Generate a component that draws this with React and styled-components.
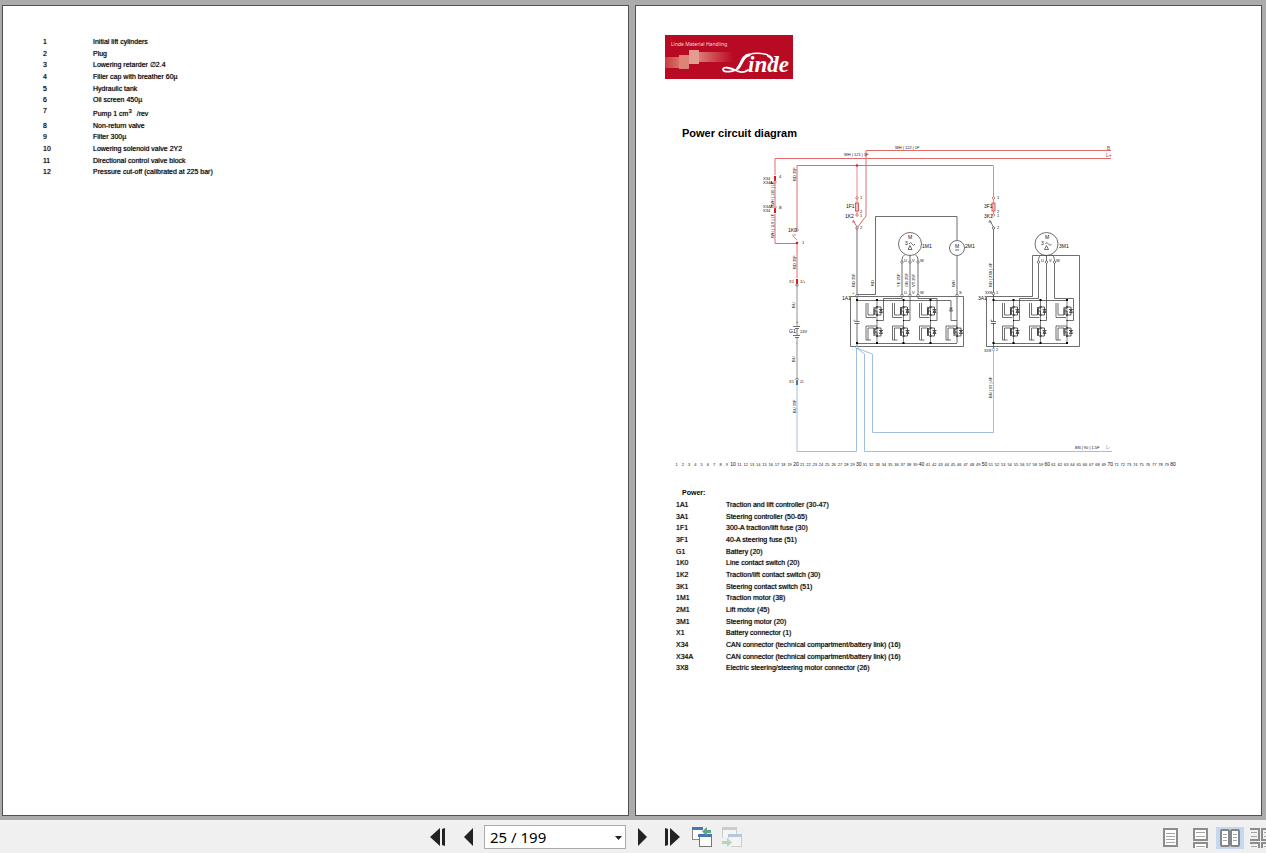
import { useState } from "react";
import styled, { createGlobalStyle } from "styled-components";

const GlobalStyle = createGlobalStyle`
  * {
    box-sizing: border-box;
  }
  body {
    margin: 0;
    font-family: "Liberation Sans", Arial, sans-serif;
    overflow: hidden;
  }
`;

const Viewer = styled.div`
  display: flex;
  flex-direction: column;
  height: 100vh;
  background-color: #ababab;
`;

const Spread = styled.main`
  flex: 1;
  min-height: 0;
  display: grid;
  grid-template-columns: 1fr 1fr;
  gap: 6px;
  padding: 5px 4px 4px 2px;
`;

const Page = styled.section`
  background-color: white;
  border: 1px solid #505050;
  padding: 29px;
  min-width: 0;
  overflow: hidden;
`;

const PartsTable = styled.table`
  border-collapse: collapse;
  margin-left: 11px;
  font-size: 7px;
  line-height: 11px;
  color: black;
  text-shadow: 0 0 1px rgba(0, 0, 0, 0.7);
`;

const PartRow = styled.tr`
  height: ${(props) => (props.$tall ? "14px" : "12px")};
  &:nth-child(3n) {
    height: 11px;
  }
`;

const PartId = styled.th`
  width: 50px;
  padding: 0;
  font-weight: 400;
  text-align: left;
  vertical-align: ${(props) => (props.$tall ? "top" : "middle")};
`;

const PartName = styled.td`
  padding: 0;
  white-space: nowrap;
  vertical-align: ${(props) => (props.$tall ? "bottom" : "middle")};
`;

const Sup = styled.sup`
  font-size: 6px;
  line-height: 1px;
  margin-right: 3px;
`;

const Logo = styled.svg`
  display: block;
  width: 128px;
  height: 44px;
`;

const Title = styled.h1`
  margin: 47px 0 0 17px;
  font-size: 11px;
  line-height: 14px;
  font-weight: 700;
`;

const Diagram = styled.svg`
  display: block;
  width: 510px;
  margin-left: 5px;
  font-family: "Liberation Sans Narrow", "Liberation Sans", Arial, sans-serif;
`;

const LegendTitle = styled.h2`
  margin: 0 0 0 17px;
  font-size: 7px;
  line-height: 11px;
  font-weight: 700;
`;

const Toolbar = styled.footer`
  display: flex;
  height: 33px;
  padding-left: 14px;
  background-color: #f0f0f0;
  overflow: hidden;
`;

const Nav = styled.nav`
  flex: 1;
  display: flex;
  align-items: center;
  justify-content: center;
  gap: 2px;
  padding-top: 1px;
`;

const ViewModes = styled.div`
  flex: none;
  width: 110px;
  display: flex;
  align-items: center;
  gap: 2px;
  padding-top: 2px;
  overflow: hidden;
`;

const ToolButton = styled.button`
  flex: none;
  display: flex;
  align-items: center;
  justify-content: center;
  width: 28px;
  height: 22px;
  padding: 0;
  border: none;
  background-color: ${(props) => (props.$active ? "#c5d8f1" : "transparent")};
`;

const PageBox = styled.div`
  position: relative;
  width: 142px;
  height: 24px;
`;

const PageSelect = styled.select`
  appearance: none;
  width: 100%;
  height: 100%;
  padding: 0 20px 0 5px;
  border: 1px solid #ababab;
  border-radius: 0;
  background-color: white;
  color: black;
  font-family: "Noto Sans", "Open Sans", sans-serif;
  font-size: 15px;
`;

const SelectArrow = styled.svg`
  position: absolute;
  right: 4px;
  top: 11px;
  pointer-events: none;
`;

const hydraulicParts = [
  ["1", "Initial lift cylinders"],
  ["2", "Plug"],
  ["3", "Lowering retarder ∅2.4"],
  ["4", "Filler cap with breather 60µ"],
  ["5", "Hydraulic tank"],
  ["6", "Oil screen 450µ"],
  ["7", <>Pump 1 cm<Sup>3</Sup> /rev</>, true],
  ["8", "Non-return valve"],
  ["9", "Filter 300µ"],
  ["10", "Lowering solenoid valve 2Y2"],
  ["11", "Directional control valve block"],
  ["12", "Pressure cut-off (calibrated at 225 bar)"],
];

const powerParts = [
  ["1A1", "Traction and lift controller (30-47)"],
  ["3A1", "Steering controller (50-65)"],
  ["1F1", "300-A traction/lift fuse (30)"],
  ["3F1", "40-A steering fuse (51)"],
  ["G1", "Battery (20)"],
  ["1K0", "Line contact switch (20)"],
  ["1K2", "Traction/lift contact switch (30)"],
  ["3K1", "Steering contact switch (51)"],
  ["1M1", "Traction motor (38)"],
  ["2M1", "Lift motor (45)"],
  ["3M1", "Steering motor (20)"],
  ["X1", "Battery connector (1)"],
  ["X34", "CAN connector (technical compartment/battery link) (16)"],
  ["X34A", "CAN connector (technical compartment/battery link) (16)"],
  ["3X8", "Electric steering/steering motor connector (26)"],
];

const Parts = ({ rows }) => (
  <PartsTable>
    <tbody>
      {rows.map(([id, name, tall]) => (
        <PartRow key={id} $tall={tall}>
          <PartId scope="row" $tall={tall}>
            {id}
          </PartId>
          <PartName $tall={tall}>{name}</PartName>
        </PartRow>
      ))}
    </tbody>
  </PartsTable>
);

const LindeLogo = () => (
  <Logo viewBox="0 0 128 44" role="img" aria-label="Linde Material Handling">
    <defs>
      <linearGradient id="fadeRight">
        <stop offset="0" stopColor="#dd7a72" />
        <stop offset="1" stopColor="#b90a24" />
      </linearGradient>
      <linearGradient id="fadeLeft">
        <stop offset="0" stopColor="#c63c40" />
        <stop offset="1" stopColor="#d8706a" />
      </linearGradient>
    </defs>
    <rect width="128" height="44" fill="#b90a24" />
    <rect x="0" y="22" width="14" height="11" fill="url(#fadeLeft)" />
    <rect x="34" y="17" width="34" height="10" fill="url(#fadeRight)" />
    <rect x="14" y="20" width="10" height="14" fill="#dc8476" />
    <rect x="24" y="15" width="10" height="14" fill="#e39d90" />
    <text x="6" y="11" fontSize="5" fill="#f6dcdc" fontFamily="Noto Sans">
      Linde Material Handling
    </text>
    <g fill="none" stroke="white" strokeLinecap="round">
      <path d="M73 33C70 37 58 38 58 34.500C58 31 66 33 71 35.500C75 37.500 79 38 83 35" strokeWidth="1.800" />
      <path d="M73 33C77 29 77 21 84 20" strokeWidth="3" />
      <path d="M78 24C82 19 90 18 96 18.500C104 19 109 23 107 27" strokeWidth="1.500" />
      <path d="M103 21c4 1.500 4.500 4 3.500 6" strokeWidth="2.200" />
    </g>
    <text
      x="83"
      y="37"
      fontSize="23"
      fontWeight="700"
      fontStyle="italic"
      fontFamily="Liberation Serif"
      fill="white"
    >
      inde
    </text>
  </Logo>
);

const RED = "#e26a6a";
const BLUE = "#9fc0e2";
const INK = "#4a4a4a";

// power transistor with its body diode; the lower one of a leg is flipped
const Mosfet = ({ x, y, flip }) => (
  <g transform={`translate(${x} ${y})`} fill="none" stroke={INK}>
    <path
      d={flip ? "M-11 8v-14h11M-9 8v-12h6v6M-11 8h5" : "M-11-8v14.500h10M-9-8v12h6v-6"}
      strokeWidth="0.800"
    />
    <path d="M-3-4v8M-2-4v8M-2-3h2M-2 0h2v3" stroke="#333" strokeWidth="0.800" />
    <path d="M0-4h4v8h-4M2-1.500h4M2.500 1.500h3l-1.500-3z" stroke="#333" strokeWidth="0.800" />
    <circle cx="0" cy="-4" r="0.800" fill="black" />
    <circle cx="0" cy="4" r="0.800" fill="black" />
  </g>
);

const Leg = ({ x }) => (
  <g>
    <path d={`M${x} 300V343`} stroke={INK} strokeWidth="0.700" />
    <Mosfet x={x} y={311} />
    <Mosfet x={x} y={332} flip />
    <rect x={x - 1} y="299" width="2" height="2" />
    <rect x={x - 1} y="342" width="2" height="2" />
    <rect x={x - 0.5} y="320" width="1" height="1" />
  </g>
);

const Terminal = ({ x, y, color = INK }) => (
  <circle cx={x} cy={y} r="1.200" fill="white" stroke={color} strokeWidth="0.700" />
);

const Motor = ({ x, y }) => (
  <g fill="none" stroke={INK} strokeWidth="0.800">
    <circle cx={x} cy={y} r="11.500" />
    <path d={`M${x - 1} ${y}q1.500-3 3 0t3 0`} />
    <path d={`M${x - 2} ${y + 5.5}l2-4l2 4z`} />
    <path d={`M${x - 5} ${y + 10.5}q-3 2-3 5v3M${x} ${y + 11.5}v6M${x + 5} ${y + 10.5}q3 2 3 5v3`} />
  </g>
);

// the fuse and contactor chain that feeds a controller
const Feed = ({ x }) => (
  <g fill="none" stroke="#d04040" strokeWidth="0.800">
    <path d={`M${x} 165.500V216`} stroke={RED} />
    <rect x={x - 1.5} y="203" width="3" height="8" fill="#f3c0c0" />
    <path d={`M${x} 227l-4-7M${x - 5} 222h3`} stroke={x > 900 ? INK : "#d04040"} />
    <Terminal x={x} y={198} color="#d04040" />
    <Terminal x={x} y={215} color="#d04040" />
    <Terminal x={x} y={228} />
  </g>
);

const labels = [
  [895, 149, "WH | 122 | 1F"],
  [844, 156, "WH | 121 | 1F"],
  [1075, 449, "BN | 90 | 1.5F"],
  [763, 180, "X34"],
  [763, 184, "X34A"],
  [763, 208, "X34A"],
  [763, 212, "X34"],
  [779, 178, "4"],
  [779, 209, "B"],
  [802, 244, "1"],
  [789, 283, "X1"],
  [800, 283, "1/+"],
  [789, 383, "X1"],
  [800, 383, "2/-"],
  [800, 333, "24V"],
  [860, 199, "1"],
  [860, 213, "2"],
  [860, 217, "1"],
  [860, 229, "2"],
  [997, 199, "1"],
  [997, 213, "2"],
  [997, 217, "1"],
  [997, 229, "2"],
  [904, 262, "U"],
  [912, 262, "V"],
  [920, 262, "W"],
  [1041, 262, "U"],
  [1049, 262, "V"],
  [1056, 262, "W"],
  [904, 294, "U"],
  [912, 294, "V"],
  [920, 294, "W"],
  [959, 294, "S"],
  [852, 294, "+"],
  [852, 350, "-"],
  [985, 294, "3X8"],
  [996, 294, "1"],
  [984, 352, "3X8"],
  [996, 351, "2"],
  [853, 321, "+"],
  [990, 321, "+"],
  [796, 323, "+"],
  [796, 344, "-"],
];

const deviceLabels = [
  [788, 232, "1K0"],
  [789, 333, "G1"],
  [846, 208, "1F1"],
  [845, 218, "1K2"],
  [984, 208, "3F1"],
  [984, 218, "3K1"],
  [922, 248, "1M1"],
  [965, 248, "2M1"],
  [1059, 248, "3M1"],
  [842, 300, "1A1"],
  [978, 300, "3A1"],
  [908, 239, "M"],
  [905, 245, "3"],
  [955, 248, "M"],
  [1045, 239, "M"],
  [1041, 245, "3"],
];

const wireLabels = [
  [796, 181, "RD 35F"],
  [774, 206, "WH | 120 | 1F"],
  [774, 238, "WH | 119 | 1F"],
  [796, 269, "RD 35F"],
  [795, 308, "BU"],
  [795, 362, "BU"],
  [796, 413, "BU 35F"],
  [855, 287, "RD 35F"],
  [874, 286, "RD"],
  [900, 287, "YE 25F"],
  [908, 287, "GN 25F"],
  [915, 287, "VT 25F"],
  [955, 287, "WH"],
  [992, 287, "RD | 23B | 4F"],
  [992, 398, "BN | 93 | 4F"],
];

const PowerCircuit = () => (
  <Diagram viewBox="670 140 510 347" role="img" aria-label="Power circuit diagram">
    <g fill="none" stroke={RED}>
      <path d="M866 216V150.500H1111M775 175V158.500H1111M797 230V165.500H993" />
      <path d="M775 183V205M775 214V243.500H797V278M866 216L857 228" />
      <path d="M797 240l-4-4M792 235h4" strokeWidth="0.800" />
    </g>
    <g fill="#e01818">
      <rect x="774" y="176" width="2" height="5" />
      <rect x="774" y="208" width="2" height="5" />
      <rect x="796" y="279" width="2" height="5" />
      <circle cx="857" cy="165.500" r="1.300" />
      <circle cx="797" cy="243" r="1.300" />
    </g>
    <Terminal x={775} y={182} color="#d04040" />
    <Terminal x={775} y={207} color="#d04040" />
    <Terminal x={797} y={230} color="#d04040" />

    <g fill="none" stroke={BLUE}>
      <path d="M797 385V451.500H856.500V348L864.500 354V451.500H1112" />
      <path d="M856.500 348L872.500 354V432.500H993.500V349" />
    </g>

    <Feed x={857} />
    <Feed x={993.5} />

    <g fill="none" stroke={INK} strokeWidth="0.800">
      <path d="M797 286V326M797 337V380" stroke="#777" />
      <path d="M793 326.500h7M795 328.500h4M793 335.500h7M795 337.500h4M797 329v6" />
      <path d="M857 229V321M857 323V347M993.500 229V321M993.500 323V349" />
      <path d="M854.500 321.500h5M854.500 323.500h5M991 321.500h5M991 323.500h5" />
      <path d="M857 294.500H875.500V216.500H957V240M957 256V343" />
      <circle cx="957" cy="248" r="7.500" />
      <path d="M955 250h4" />
      <path d="M850.500 296.500H963.500V346.500H850.500Z" />
      <path d="M857 300.500H951V320.500H957M857 343.500H957" />
      <path d="M949.500 308h3M949.500 311h3l-1.500-3z" />
      <path d="M902 262V298.500H883.500V320.500H877M910 262V320.500H903.500M918 262V298.500H937V320.500H930.500" />
      <path d="M986.500 296.500H1032.500V255.500H1079.500V346.500H986.500Z" />
      <path d="M993 300.500H1067M993 343.500H1067" />
      <path d="M1038.500 262V298.500H1019.500V320.500H1013.500M1046.500 262V320.500H1040.500M1054.500 262V298.500H1073.500V320.500H1067" />
    </g>
    <Motor x={910} y={244} />
    <Motor x={1046.5} y={244} />

    {[877, 903.5, 930.5, 1013.5, 1040.5, 1067].map((x) => (
      <Leg key={x} x={x} />
    ))}
    <Mosfet x={957} y={332} flip />
    {[857, 993.5].map((x) => (
      <g key={x}>
        <rect x={x - 1} y="299" width="2" height="2" />
        <rect x={x - 1} y="342" width="2" height="2" />
      </g>
    ))}

    {[902, 910, 918, 1038.5, 1046.5, 1054.5].map((x) => (
      <Terminal key={x} x={x} y={262} />
    ))}
    {[857, 902, 910, 918, 957].map((x) => (
      <Terminal key={x} x={x} y={295.5} />
    ))}
    <Terminal x={797} y={285} />
    <Terminal x={797} y={379.5} />
    <rect x="796" y="381" width="2" height="4" fill="#2f78d8" />
    <Terminal x={993.5} y={293.5} />
    <Terminal x={857} y={347.5} color="#5b94d6" />
    <Terminal x={993.5} y={349.5} color="#5b94d6" />

    <g fontSize="4" fill="#111">
      {labels.map(([x, y, text]) => (
        <text key={`${x}-${y}`} x={x} y={y}>
          {text}
        </text>
      ))}
      {wireLabels.map(([x, y, text]) => (
        <text key={`${x}-${y}`} transform={`translate(${x} ${y}) rotate(-90)`}>
          {text}
        </text>
      ))}
    </g>
    <g fontSize="5" fill="#111">
      {deviceLabels.map(([x, y, text]) => (
        <text key={`${x}-${y}`} x={x} y={y}>
          {text}
        </text>
      ))}
    </g>
    <g fontSize="5">
      <text x="1107" y="150" fill="#d03030">B</text>
      <text x="1106" y="157" fill="#d03030">L+</text>
      <text x="1106" y="449" fill="#6d9fd8">L-</text>
    </g>

    <g fill="#111" textAnchor="middle">
      {Array.from({ length: 80 }, (_, i) => i + 1).map((n) => (
        <text
          key={n}
          x={676.5 + (n - 1) * 6.285}
          y="466"
          fontSize={n % 10 === 0 ? 5 : 4}
        >
          {n}
        </text>
      ))}
    </g>
  </Diagram>
);

const FirstIcon = () => (
  <svg width="16" height="18" fill="#222">
    <path d="M10 0v18L0 9zM12 1l3-1v18l-3-1z" />
  </svg>
);

const LastIcon = () => (
  <svg width="16" height="18" fill="#222">
    <path d="M6 0v18l10-9zM4 1L1 0v18l3-1z" />
  </svg>
);

const PrevIcon = () => (
  <svg width="9" height="18" fill="#222">
    <path d="M9 0v18L0 9z" />
  </svg>
);

const NextIcon = () => (
  <svg width="9" height="18" fill="#222">
    <path d="M0 0v18l9-9z" />
  </svg>
);

const BackIcon = () => (
  <svg width="20" height="20" fill="none">
    <rect x="0.500" y="1.500" width="14" height="11" fill="white" stroke="#8a8a8a" />
    <path d="M0 1.500h11" stroke="#4677b0" strokeWidth="3" />
    <rect x="7.500" y="8.500" width="12" height="11" fill="white" stroke="#777" />
    <path d="M6 8.500h14" stroke="#4677b0" strokeWidth="3" />
    <path d="M11 0h9v7h-9z" fill="#f0f0f0" />
    <path d="M19 4.500h-6" stroke="#63a58a" strokeWidth="3" />
    <path d="M10 4.500l5-4.500v9z" fill="#63a58a" />
  </svg>
);

const ForwardIcon = () => (
  <svg width="20" height="20" fill="none">
    <rect x="0.500" y="1.500" width="14" height="11" fill="#f4f4f4" stroke="#cccccc" />
    <path d="M0 1.500h15" stroke="#cccccc" strokeWidth="3" />
    <rect x="6.500" y="8.500" width="13" height="11" fill="#f4f4f4" stroke="#cccccc" />
    <path d="M6 8.500h14" stroke="#b4c8de" strokeWidth="3" />
    <path d="M0 11h9v9H0z" fill="#f0f0f0" />
    <path d="M0 15.500h6" stroke="#b8d2c7" strokeWidth="3" />
    <path d="M10 15.500L5 11v9z" fill="#b8d2c7" />
  </svg>
);

const SingleIcon = () => (
  <svg width="15" height="19" fill="none" stroke="#8c8c8c">
    <rect x="1" y="1" width="13" height="17" fill="white" strokeWidth="2" />
    <path d="M3 5.500h9M3 8.500h9M3 11.500h9M3 14.500h9" stroke="#a5a5a5" />
  </svg>
);

const ContinuousIcon = () => (
  <svg width="15" height="20" fill="none" stroke="#8c8c8c">
    <path d="M1 0v12h13V0M1 20v-5h13v5" fill="white" strokeWidth="2" />
    <path d="M0 1h15" strokeWidth="2" />
    <path d="M3 4.500h9M3 8.500h9M3 18.500h9" stroke="#a5a5a5" />
  </svg>
);

const FacingIcon = () => (
  <svg width="20" height="18" fill="none" stroke="#858585">
    <rect x="1" y="1" width="8" height="16" rx="1" fill="white" strokeWidth="2" />
    <rect x="11" y="1" width="8" height="16" rx="1" fill="white" strokeWidth="2" />
    <path d="M3 5.500h4M3 8.500h4M3 11.500h4M13 5.500h4M13 8.500h4M13 11.500h4" stroke="#a5a5a5" />
  </svg>
);

const FacingContinuousIcon = () => (
  <svg width="20" height="20" fill="none" stroke="#8c8c8c">
    <path d="M0 1h9v11H0M20 1h-8v11h8M0 15h9v5M20 15h-8v5" strokeWidth="2" />
    <path d="M1 4.500h6M1 8.500h6M14 4.500h6M14 8.500h6M1 18.500h6M14 18.500h6" stroke="#a5a5a5" />
  </svg>
);

const PAGE_COUNT = 199;

const App = () => {
  const [page, setPage] = useState(25);
  const go = (n) => setPage(Math.min(PAGE_COUNT, Math.max(1, n)));

  return (
    <Viewer>
      <GlobalStyle />
      <Spread>
        <Page>
          <Parts rows={hydraulicParts} />
        </Page>
        <Page>
          <LindeLogo />
          <Title>Power circuit diagram</Title>
          <PowerCircuit />
          <LegendTitle>Power:</LegendTitle>
          <Parts rows={powerParts} />
        </Page>
      </Spread>
      <Toolbar>
        <Nav>
          <ToolButton aria-label="First page" onClick={() => go(1)}>
            <FirstIcon />
          </ToolButton>
          <ToolButton aria-label="Previous page" onClick={() => go(page - 1)}>
            <PrevIcon />
          </ToolButton>
          <PageBox>
            <PageSelect
              aria-label="Page"
              value={page}
              onChange={(e) => go(Number(e.target.value))}
            >
              {Array.from({ length: PAGE_COUNT }, (_, i) => (
                <option key={i} value={i + 1}>
                  {i + 1} / {PAGE_COUNT}
                </option>
              ))}
            </PageSelect>
            <SelectArrow width="7" height="4">
              <path d="M0 0h7L3.500 4z" fill="#222" />
            </SelectArrow>
          </PageBox>
          <ToolButton aria-label="Next page" onClick={() => go(page + 1)}>
            <NextIcon />
          </ToolButton>
          <ToolButton aria-label="Last page" onClick={() => go(PAGE_COUNT)}>
            <LastIcon />
          </ToolButton>
          <ToolButton aria-label="Previous view">
            <BackIcon />
          </ToolButton>
          <ToolButton aria-label="Next view" disabled>
            <ForwardIcon />
          </ToolButton>
        </Nav>
        <ViewModes>
          <ToolButton aria-label="Single page">
            <SingleIcon />
          </ToolButton>
          <ToolButton aria-label="Continuous">
            <ContinuousIcon />
          </ToolButton>
          <ToolButton aria-label="Facing" $active>
            <FacingIcon />
          </ToolButton>
          <ToolButton aria-label="Continuous facing">
            <FacingContinuousIcon />
          </ToolButton>
        </ViewModes>
      </Toolbar>
    </Viewer>
  );
};

export default App;
